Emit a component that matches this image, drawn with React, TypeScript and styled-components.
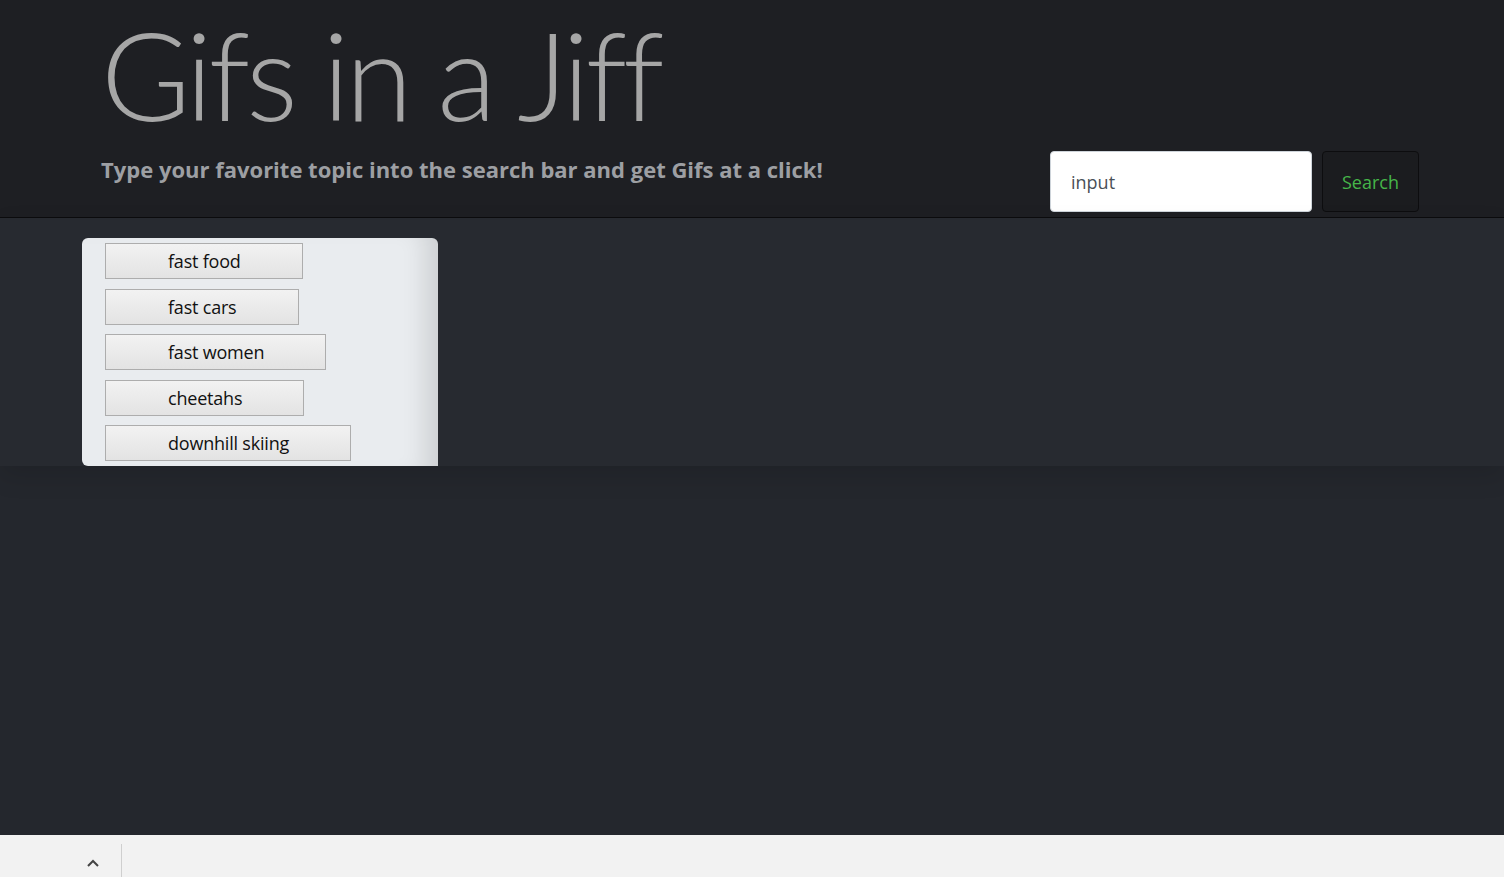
import React from "react";
import styled, { createGlobalStyle } from "styled-components";

const Global = createGlobalStyle`
  html, body { margin: 0; padding: 0; }
  body {
    background: #24272d;
    font-family: "Open Sans", "Noto Sans", sans-serif;
    overflow: hidden;
  }
`;

const Page = styled.div`
  display: flex;
  flex-direction: column;
  height: 877px;
`;

const Header = styled.header`
  background: #1e1f23;
  border-bottom: 1px solid #0c0c0e;
  height: 218px;
  box-sizing: border-box;
  display: grid;
  grid-template-columns: 1fr auto;
  align-items: end;
  padding: 0 85px 5px 101px;
`;

const TitleBlock = styled.div`
  display: flex;
  flex-direction: column;
  align-self: stretch;
`;

const Title = styled.h1`
  margin: 1px 0 0 0;
  padding-right: 20px;
  font-family: "Lato", "Open Sans", sans-serif;
  font-weight: 300;
  font-size: 122px;
  line-height: 146px;
  color: #a6a6a6;
  letter-spacing: -4.2px;
  white-space: nowrap;
`;

const Subtitle = styled.p`
  margin: 7px 0 0 0;
  font-weight: 700;
  font-size: 22px;
  line-height: 30px;
  color: #9d9fa3;
`;

const SearchForm = styled.form`
  display: flex;
  gap: 10px;
`;

const SearchInput = styled.input`
  width: 262px;
  height: 61px;
  box-sizing: border-box;
  border: 1px solid #ced4da;
  border-radius: 4px;
  background: #fff;
  padding: 0 20px;
  font-family: inherit;
  font-size: 18px;
  color: #495057;
  &::placeholder { color: #495057; }
`;

const SearchButton = styled.button`
  width: 97px;
  height: 61px;
  border: 1px solid #0d0d0f;
  border-radius: 4px;
  background: #1b1c1f;
  color: #46b549;
  font-family: inherit;
  font-size: 18px;
  cursor: pointer;
`;

const Main = styled.main`
  flex: 1;
  background: #24272d;
`;

const Band = styled.section`
  background: #272a30;
  padding: 20px 0 0 82px;
  box-shadow: 0 10px 24px rgba(0, 0, 0, 0.12);
`;

const TopicCard = styled.div`
  width: 356px;
  height: 228px;
  box-sizing: border-box;
  background: #e9ecef;
  border-radius: 6px 6px 0 6px;
  box-shadow: inset -28px 0 24px -16px rgba(0, 0, 0, 0.12);
  padding: 5px 0 0 23px;
  display: flex;
  flex-direction: column;
  align-items: flex-start;
  gap: 9.5px;
`;

const TopicButton = styled.button`
  height: 36px;
  box-sizing: border-box;
  padding: 0 61px 0 62px;
  border: 1px solid #adadad;
  border-radius: 0;
  background: linear-gradient(#f2f2f2, #e3e3e3);
  font-family: inherit;
  font-size: 18px;
  letter-spacing: -0.2px;
  color: #111;
  cursor: pointer;
`;

const BottomBar = styled.footer`
  height: 42px;
  background: #f2f2f2;
  display: flex;
  align-items: stretch;
`;

const Toggle = styled.div`
  width: 122px;
  box-sizing: border-box;
  border-right: 1px solid #cfcfcf;
  margin-top: 9px;
  display: flex;
  justify-content: flex-end;
  align-items: center;
  padding: 4px 22px 0 0;
`;

const topics = ["fast food", "fast cars", "fast women", "cheetahs", "downhill skiing"];

export default function App() {
  return (
    <>
      <Global />
      <Page>
        <Header>
          <TitleBlock>
            <Title>Gifs in a Jiff</Title>
            <Subtitle>Type your favorite topic into the search bar and get Gifs at a click!</Subtitle>
          </TitleBlock>
          <SearchForm onSubmit={(e) => e.preventDefault()}>
            <SearchInput placeholder="input" />
            <SearchButton type="submit">Search</SearchButton>
          </SearchForm>
        </Header>
        <Main>
          <Band>
            <TopicCard>
              {topics.map((t) => (
                <TopicButton key={t}>{t}</TopicButton>
              ))}
            </TopicCard>
          </Band>
        </Main>
        <BottomBar>
          <Toggle>
            <svg width="12" height="8" viewBox="0 0 12 8">
              <path d="M1 7 L6 2 L11 7" fill="none" stroke="#444" strokeWidth="2" />
            </svg>
          </Toggle>
        </BottomBar>
      </Page>
    </>
  );
}
